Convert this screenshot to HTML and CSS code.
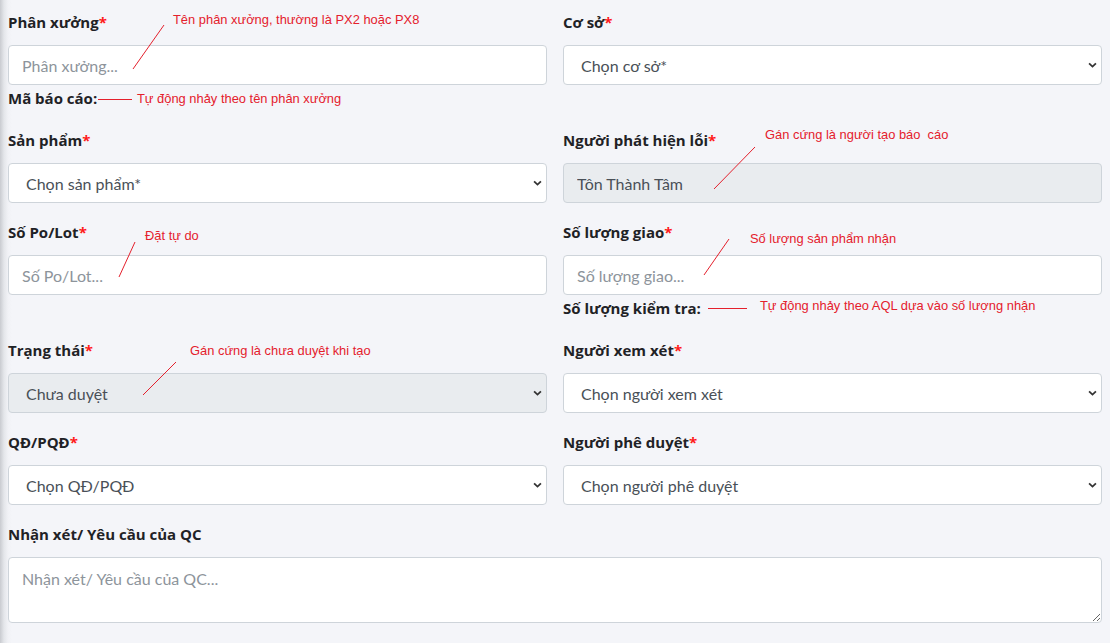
FILE: index.html
```html
<!DOCTYPE html>
<html lang="vi">
<head>
<meta charset="utf-8">
<title>Báo cáo lỗi</title>
<link rel="stylesheet" href="styles.css">
</head>
<body>
<div class="page">
  <form class="form-grid">
    <div class="field">
      <label class="label">Phân xưởng<span class="req">*</span></label>
      <input class="control" type="text" placeholder="Phân xưởng...">
      <div class="info">Mã báo cáo:</div>
    </div>
    <div class="field">
      <label class="label">Cơ sở<span class="req">*</span></label>
      <select class="control select"><option>Chọn cơ sở*</option></select>
    </div>

    <div class="field">
      <label class="label">Sản phẩm<span class="req">*</span></label>
      <select class="control select"><option>Chọn sản phẩm*</option></select>
    </div>
    <div class="field">
      <label class="label">Người phát hiện lỗi<span class="req">*</span></label>
      <input class="control readonly" type="text" value="Tôn Thành Tâm" disabled>
    </div>

    <div class="field">
      <label class="label">Số Po/Lot<span class="req">*</span></label>
      <input class="control" type="text" placeholder="Số Po/Lot...">
    </div>
    <div class="field">
      <label class="label">Số lượng giao<span class="req">*</span></label>
      <input class="control" type="text" placeholder="Số lượng giao...">
      <div class="info">Số lượng kiểm tra:</div>
    </div>

    <div class="field">
      <label class="label">Trạng thái<span class="req">*</span></label>
      <select class="control select readonly" disabled><option>Chưa duyệt</option></select>
    </div>
    <div class="field">
      <label class="label">Người xem xét<span class="req">*</span></label>
      <select class="control select"><option>Chọn người xem xét</option></select>
    </div>

    <div class="field">
      <label class="label">QĐ/PQĐ<span class="req">*</span></label>
      <select class="control select"><option>Chọn QĐ/PQĐ</option></select>
    </div>
    <div class="field">
      <label class="label">Người phê duyệt<span class="req">*</span></label>
      <select class="control select"><option>Chọn người phê duyệt</option></select>
    </div>

    <div class="field wide">
      <label class="label">Nhận xét/ Yêu cầu của QC</label>
      <textarea class="control area" placeholder="Nhận xét/ Yêu cầu của QC..."></textarea>
    </div>
  </form>

  <svg class="notes-lines" width="1110" height="643" viewBox="0 0 1110 643">
    <g stroke="#e4202c" stroke-width="1" fill="none">
      <line x1="133" y1="69" x2="164" y2="25"/>
      <line x1="98" y1="99.5" x2="132" y2="99.5"/>
      <line x1="714" y1="189" x2="755" y2="147"/>
      <line x1="119" y1="277" x2="135" y2="242"/>
      <line x1="704" y1="275" x2="729" y2="239"/>
      <line x1="708" y1="308.5" x2="747" y2="308.5"/>
      <line x1="143" y1="395" x2="176" y2="362"/>
    </g>
  </svg>
  <span class="note n1">Tên phân xưởng, thường là PX2 hoặc PX8</span>
  <span class="note n2">Tự động nhảy theo tên phân xưởng</span>
  <span class="note n3">Gán cứng là người tạo báo&nbsp; cáo</span>
  <span class="note n4">Đặt tự do</span>
  <span class="note n5">Số lượng sản phẩm nhận</span>
  <span class="note n6">Tự động nhảy theo AQL dựa vào số lượng nhận</span>
  <span class="note n7">Gán cứng là chưa duyệt khi tạo</span>
</div>
</body>
</html>
```

FILE: styles.css
```css
html, body {
  margin: 0;
  padding: 0;
}
body {
  background: linear-gradient(to right, #c9cbd0 0px, #e4e6ea 4px, #f1f2f6 8px, #f4f5f9 12px);
  font-family: "Lato", "Noto Sans", sans-serif;
  color: #212529;
  width: 1110px;
  height: 643px;
  overflow: hidden;
}
.page {
  position: relative;
  width: 1110px;
  height: 643px;
}
.form-grid {
  display: grid;
  grid-template-columns: 1fr 1fr;
  column-gap: 16px;
  row-gap: 17px;
  padding: 10px 8px 0 8px;
  align-items: start;
}
.field {
  display: flex;
  flex-direction: column;
}
.field.wide {
  grid-column: 1 / span 2;
}
.label {
  font-family: "Open Sans", "Lato", sans-serif;
  font-size: 15px;
  font-weight: 700;
  line-height: 24px;
  margin-bottom: 11px;
  color: #1f2226;
}
.req {
  color: #ff1a1a;
}
.control {
  box-sizing: border-box;
  height: 40px;
  width: 100%;
  border: 1px solid #ced4da;
  border-radius: 4px;
  background: #fff;
  font-family: inherit;
  font-size: 16px;
  color: #495057;
  padding: 0 13px;
  margin: 0;
  outline: none;
}
.control::placeholder {
  color: #8d949b;
  opacity: 1;
}
.select {
  -webkit-appearance: none;
  appearance: none;
  padding-left: 17px;
  background-image: url("data:image/svg+xml,%3Csvg xmlns='http://www.w3.org/2000/svg' width='10' height='6' viewBox='0 0 10 6'%3E%3Cpath d='M1.2 1.2l3.8 3.6 3.8-3.6' fill='none' stroke='%23333' stroke-width='2'/%3E%3C/svg%3E");
  background-repeat: no-repeat;
  background-position: right 4px center;
  background-size: 9px 6px;
}
.readonly {
  background-color: #e9ecef;
  color: #495057;
  opacity: 1;
}
.readonly:disabled {
  -webkit-text-fill-color: #495057;
}
.area {
  height: 66px;
  padding: 9px 13px;
  resize: vertical;
  line-height: 24px;
}
.info {
  height: 26px;
  line-height: 26px;
  font-family: "Open Sans", "Lato", sans-serif;
  font-size: 15px;
  font-weight: 700;
  color: #1f2226;
}
.notes-lines {
  position: absolute;
  left: 0;
  top: 0;
  pointer-events: none;
}
.note {
  position: absolute;
  font-family: "Liberation Sans", Arial, sans-serif;
  font-size: 12.9px;
  line-height: 16px;
  color: #e4202c;
  white-space: pre;
}
.n1 { left: 173px; top: 12px; }
.n2 { left: 137px; top: 91px; }
.n3 { left: 765px; top: 127px; }
.n4 { left: 145px; top: 228px; }
.n5 { left: 750px; top: 231px; }
.n6 { left: 760px; top: 298px; }
.n7 { left: 190px; top: 343px; }
```
